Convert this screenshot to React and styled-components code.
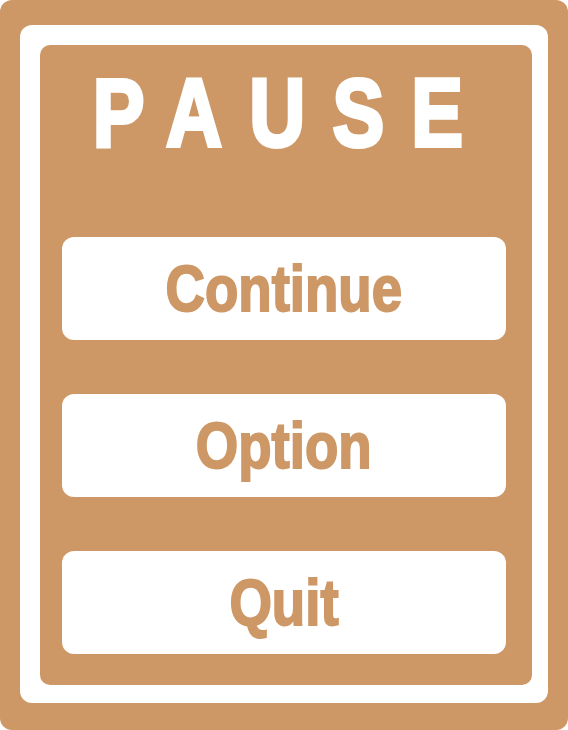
import React from 'react'
import styled, { createGlobalStyle } from 'styled-components'

const tan = '#cd9866'

const GlobalStyle = createGlobalStyle`
  html, body {
    margin: 0;
    padding: 0;
    background: #fff;
  }
`

const Screen = styled.div`
  box-sizing: border-box;
  width: 568px;
  height: 730px;
  padding: 25px 20px 27px 20px;
  background: ${tan};
  border-radius: 12px;
  display: flex;
`

const Frame = styled.div`
  box-sizing: border-box;
  flex: 1;
  min-width: 0;
  padding: 20px 16px 18px 20px;
  background: #fff;
  border-radius: 12px;
  display: flex;
`

const Panel = styled.div`
  box-sizing: border-box;
  flex: 1;
  min-width: 0;
  padding: 0 26px 31px 22px;
  background: ${tan};
  border-radius: 10px;
  display: flex;
  flex-direction: column;
`

const Title = styled.h1`
  margin: 0;
  flex-shrink: 0;
  height: 192px;
  padding: 19px 0 0 15px;
  box-sizing: border-box;
  display: flex;
  justify-content: center;
  align-items: flex-start;
  color: #fff;
  -webkit-text-stroke: 4px #fff;
  font-family: "Liberation Sans", Arial, sans-serif;
  font-weight: 700;
  font-size: 97px;
  line-height: 97px;
  white-space: nowrap;
`

// the reference uses a condensed face, so squeeze Arial-width glyphs
const Condensed = styled.span`
  display: inline-block;
  flex-shrink: 0;
  letter-spacing: ${p => p.$spacing || 0}px;
  transform: scaleX(${p => p.$squeeze});
`

const Menu = styled.div`
  flex-shrink: 0;
  display: flex;
  flex-direction: column;
  gap: 54px;
`

const MenuButton = styled.button`
  height: 103px;
  padding: 0;
  border: 0;
  border-radius: 12px;
  background: #fff;
  color: ${tan};
  -webkit-text-stroke: 2px ${tan};
  font-family: "Liberation Sans", Arial, sans-serif;
  font-weight: 700;
  font-size: 65px;
  white-space: nowrap;
  cursor: pointer;
`

const items = ['Continue', 'Option', 'Quit']

const App = () => (
  <>
    <GlobalStyle />
    <Screen>
      <Frame>
        <Panel>
          <Title>
            <Condensed $squeeze={0.8} $spacing={34}>PAUSE</Condensed>
          </Title>
          <Menu>
            {items.map(label => (
              <MenuButton key={label}>
                <Condensed $squeeze={0.84}>{label}</Condensed>
              </MenuButton>
            ))}
          </Menu>
        </Panel>
      </Frame>
    </Screen>
  </>
)

export default App
